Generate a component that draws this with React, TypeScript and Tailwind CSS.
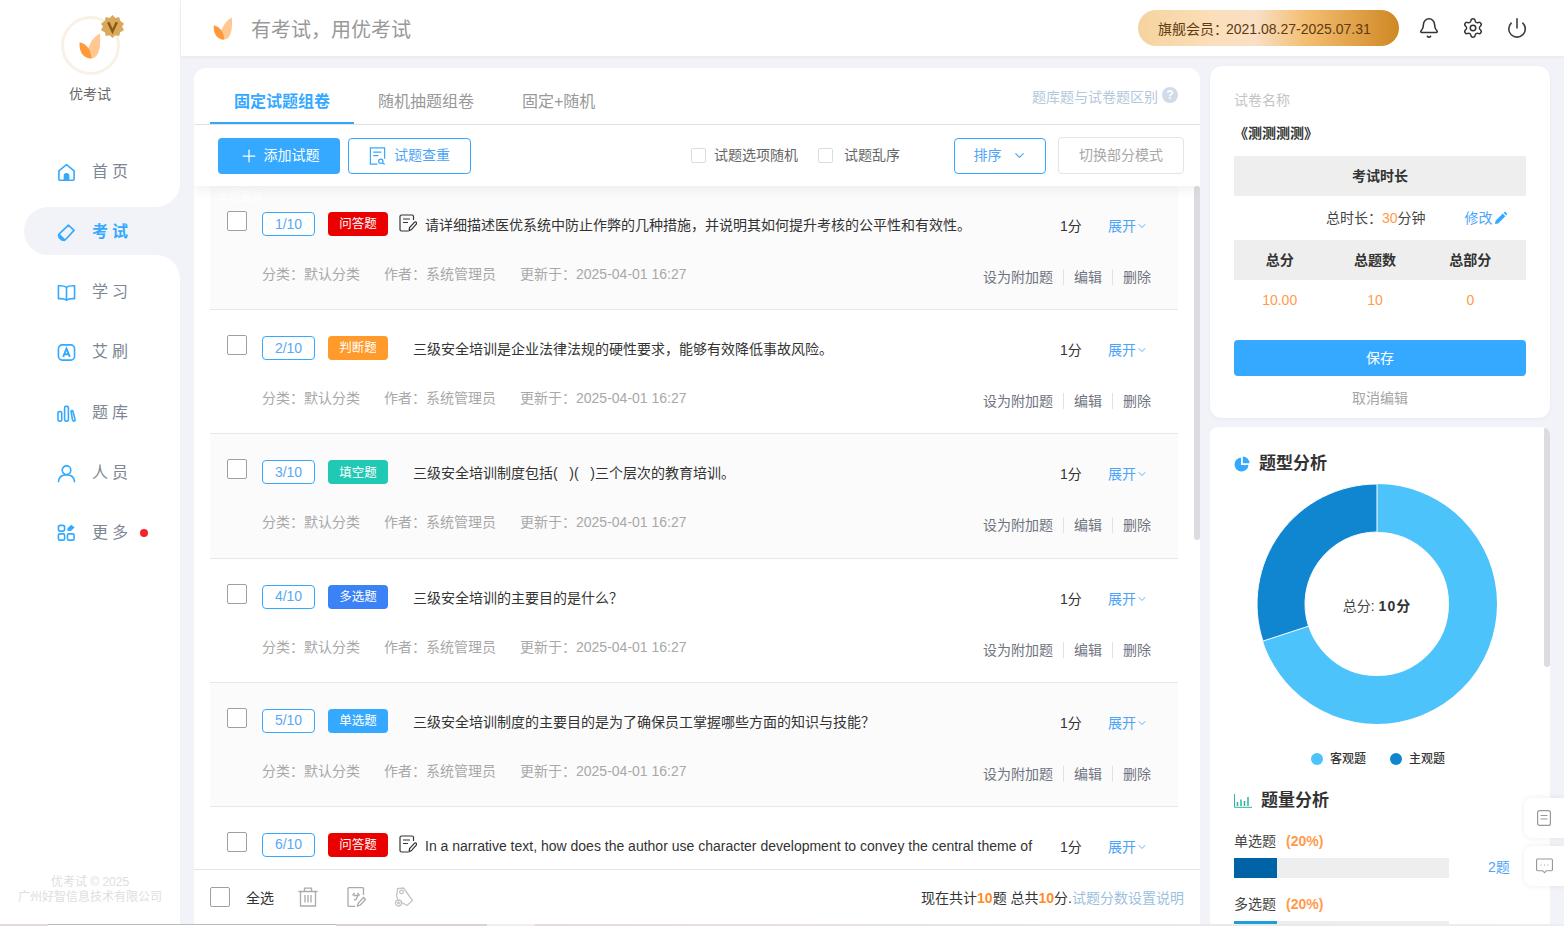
import { Bell, ChevronDown, Plus, Power, Settings } from "lucide-react";

const font = "[font-family:'Liberation_Sans','Noto_Sans_CJK_SC',sans-serif]";

type Question = {
  no: string;
  type: string;
  tagClass: string;
  text: string;
  essay?: boolean;
  tinted?: boolean;
  note?: string;
  cut?: boolean;
};

const questions: Question[] = [
  {
    no: "1/10",
    type: "问答题",
    tagClass: "bg-[#eb0000]",
    text: "请详细描述医优系统中防止作弊的几种措施，并说明其如何提升考核的公平性和有效性。",
    essay: true,
    tinted: true,
    note: "该题重复",
  },
  {
    no: "2/10",
    type: "判断题",
    tagClass: "bg-[#ff9a2b]",
    text: "三级安全培训是企业法律法规的硬性要求，能够有效降低事故风险。",
  },
  {
    no: "3/10",
    type: "填空题",
    tagClass: "bg-[#1fc9b4]",
    text: "三级安全培训制度包括(\u00a0\u00a0\u00a0)(\u00a0\u00a0\u00a0)三个层次的教育培训。",
    tinted: true,
  },
  {
    no: "4/10",
    type: "多选题",
    tagClass: "bg-[#3b82f6]",
    text: "三级安全培训的主要目的是什么？",
  },
  {
    no: "5/10",
    type: "单选题",
    tagClass: "bg-[#35a9ff]",
    text: "三级安全培训制度的主要目的是为了确保员工掌握哪些方面的知识与技能？",
    tinted: true,
  },
  {
    no: "6/10",
    type: "问答题",
    tagClass: "bg-[#eb0000]",
    text: "In a narrative text, how does the author use character development to convey the central theme of",
    essay: true,
    cut: true,
  },
];

function LeafLogo({ className }: { className: string }) {
  return (
    <svg viewBox="0 0 22 26" className={className}>
      <path d="M21 0.5C21.5 9 22 25 12 25.5C9 25.5 7 23 8 20C9.5 14 12 5 21 0.5Z" fill="#ffc890" />
      <path d="M0.5 9.5C5 10 12 14 12.5 25.5C5 25.5 0 20 0.5 9.5Z" fill="#ff9a3c" />
    </svg>
  );
}

function NavIcon({ name }: { name: string }) {
  const cls = "h-[19px] w-[19px] fill-none stroke-[#35a9ff] stroke-[1.7]";
  if (name === "home")
    return (
      <svg viewBox="0 0 20 20" className={cls}>
        <path d="M2 8.2L10 1.8L18 8.2V17.2A1 1 0 0 1 17 18.2H3A1 1 0 0 1 2 17.2Z" strokeLinejoin="round" />
        <path d="M7 18V13.5A3 3 0 0 1 13 13.5V18Z" fill="#35a9ff" stroke="none" />
      </svg>
    );
  if (name === "exam")
    return (
      <svg viewBox="0 0 20 20" className={cls}>
        <path d="M12 2.2L18 7.8L8.8 17.6A2 2 0 0 1 6 17.6L2.4 14.2A2 2 0 0 1 2.4 11.4Z" strokeLinejoin="round" />
        <path d="M2.4 11L9 17.4L6.5 18.8H4.5L1.4 15.6V13Z" fill="#35a9ff" stroke="none" />
      </svg>
    );
  if (name === "book")
    return (
      <svg viewBox="0 0 20 20" className={cls}>
        <path d="M10 4.5C8 3 5 2.8 1.5 3V16.5C5 16.3 8 16.5 10 18C12 16.5 15 16.3 18.5 16.5V3C15 2.8 12 3 10 4.5ZM10 4.5V18" strokeLinejoin="round" />
      </svg>
    );
  if (name === "a")
    return (
      <svg viewBox="0 0 20 20" className={cls}>
        <rect x="1.5" y="2" width="17" height="16" rx="4" />
        <path d="M6.5 14.5L10 5.8L13.5 14.5M7.8 11.8H12.2" strokeWidth="2" />
      </svg>
    );
  if (name === "bars")
    return (
      <svg viewBox="0 0 20 20" className={cls}>
        <rect x="1" y="8" width="4" height="10" rx="1.4" />
        <rect x="8" y="2.5" width="4" height="15.5" rx="1.4" />
        <path d="M14.8 7.5C15.2 6.7 16.3 6.7 16.7 7.5L19 16.5C19.2 17.5 18.6 18 17.7 18C16.8 18 16.4 17.5 16.2 16.5Z" />
      </svg>
    );
  if (name === "user")
    return (
      <svg viewBox="0 0 20 20" className={cls}>
        <circle cx="10" cy="6.5" r="4.5" />
        <path d="M1.5 18.5C2 14 5.5 11.5 10 11.5C14.5 11.5 18 14 18.5 18.5" strokeLinecap="round" />
      </svg>
    );
  return (
    <svg viewBox="0 0 20 20" className={cls}>
      <rect x="1.5" y="2.5" width="6.5" height="6" rx="2" />
      <rect x="1.5" y="11.5" width="6.5" height="6.5" rx="1.5" />
      <rect x="11" y="11.5" width="7" height="6.5" rx="1.5" />
      <path d="M11 8.5V5.5L15 1.8L18.6 4.8L14.5 8.5Z" fill="#35a9ff" stroke="none" />
    </svg>
  );
}

function EssayIcon() {
  return (
    <svg viewBox="0 0 18 18" className="h-[18px] w-[18px] fill-none stroke-[#333] stroke-[1.2]">
      <path d="M14.5 6V2.5A1.5 1.5 0 0 0 13 1H2.5A1.5 1.5 0 0 0 1 2.5V15.5A1.5 1.5 0 0 0 2.5 17H9" />
      <path d="M4 5H11M4 8.5H9" />
      <path d="M10 16.8L10.6 13.5L15.4 8.3C16 7.7 16.8 7.7 17.3 8.3C17.8 8.9 17.8 9.6 17.2 10.2L12.5 15.6Z" />
    </svg>
  );
}

function Check() {
  return <span className="h-5 w-5 shrink-0 rounded-[2px] border border-[#a0a0a0] bg-white" />;
}

function Row({ q }: { q: Question }) {
  return (
    <div className={`relative h-[124.2px] shrink-0 border-b border-[#e8e8e8] ${q.tinted ? "bg-[#fbfbfb]" : "bg-white"}`}>
      {q.note && <span className="absolute left-[6px] top-[2px] text-[12px] leading-4 text-white">{q.note}</span>}
      <div className="flex items-start pl-[17px] pt-[25px]">
        <Check />
        <span className="ml-[15px] mt-px flex h-6 w-[53px] shrink-0 items-center justify-center rounded-[4px] border border-[#35a9ff] bg-white text-[14px] text-[#5aa9f5]">
          {q.no}
        </span>
        <span className={`ml-[13px] mt-px flex h-6 w-[60px] shrink-0 items-center justify-center rounded-[4px] pt-px text-[12.5px] text-white ${q.tagClass}`}>
          {q.type}
        </span>
        {q.essay ? (
          <span className="ml-[11px] mt-[3px] flex w-[26px] shrink-0">
            <EssayIcon />
          </span>
        ) : (
          <span className="ml-[25px] shrink-0" />
        )}
        <p className="mt-1 w-[623px] truncate text-[14px] leading-5 text-[#333]">{q.text}</p>
        <span className="ml-auto mt-[5px] w-[48px] shrink-0 text-[14px] leading-5 text-[#333]">1分</span>
        <span className="mr-[33px] mt-[5px] flex w-[37px] shrink-0 items-center whitespace-nowrap text-[14px] leading-5 text-[#4ea5f7]">
          展开
          <ChevronDown className="h-3 w-3 shrink-0 text-[#4ea5f7]" strokeWidth={1.8} />
        </span>
      </div>
      {!q.cut && (
        <div className="mt-[28px] flex items-start pl-[52px] pr-[27px] text-[14px] leading-5 text-[#a8a8a8]">
          <span className="w-[122px]">分类：默认分类</span>
          <span className="w-[136px]">作者：系统管理员</span>
          <span>更新于：2025-04-01 16:27</span>
          <span className="ml-auto mt-[3px] flex items-center text-[#6f7480]">
            设为附加题
            <i className="mx-[10px] h-4 w-px bg-[#e2e2e2]" />
            编辑
            <i className="mx-[10px] h-4 w-px bg-[#e2e2e2]" />
            删除
          </span>
        </div>
      )}
    </div>
  );
}

function Donut() {
  return (
    <svg viewBox="0 0 240 240" className="mx-auto h-[240px] w-[240px]">
      <circle cx="120" cy="120" r="96" fill="none" stroke="#4dc3fb" strokeWidth="48" />
      <path d="M120 0A120 120 0 0 0 5.9 157.1L51.5 142.2A72 72 0 0 1 120 48Z" fill="#1186d0" stroke="#fff" strokeWidth="1" />
    </svg>
  );
}

function NavInner({ icon, label, className, dot }: { icon: string; label: string; className: string; dot?: boolean }) {
  return (
    <div className={`flex items-center bg-white pl-[57px] ${className}`}>
      <NavIcon name={icon} />
      <span className="ml-[16px] text-[16px] tracking-[4px] text-[#7d8794]">{label}</span>
      {dot && <i className="ml-[8px] h-2 w-2 rounded-full bg-[#f5222d]" />}
    </div>
  );
}

export default function App() {
  return (
    <div className={`flex h-[926px] w-[1564px] flex-col overflow-hidden bg-[#f1f3f8] ${font}`}>
      <div className="flex min-h-0 flex-1">
        {/* sidebar */}
        <aside className="flex w-[180px] shrink-0 flex-col bg-white">
          <div className="flex h-[141px] shrink-0 flex-col items-center pt-[16px]">
            <div className="relative flex h-[59px] w-[59px] items-center justify-center rounded-full border-[3px] border-[#f8f1e6] bg-white">
              <LeafLogo className="h-[26px] w-[22px]" />
              <svg viewBox="0 0 24 24" className="absolute -right-[7px] -top-[4px] h-[23px] w-[23px]">
                <path d="M12 0L15 3L19 2L20 6L24 9L22 12L24 16L20 18L19 22L15 21L12 24L9 21L5 22L4 18L0 16L2 12L0 9L4 6L5 2L9 3Z" fill="#d9a95c" />
                <path d="M7.5 7.5L12 17L16.5 7.5" fill="none" stroke="#8f5a12" strokeWidth="2.6" />
              </svg>
            </div>
            <span className="mt-[9px] text-[14px] leading-5 text-[#666]">优考试</span>
          </div>
          <div className="h-[66px] shrink-0 bg-[#f1f3f8]">
            <NavInner icon="home" label="首页" className="h-[66px] rounded-br-[24px] pb-[4px]" />
          </div>
          <div className="h-12 shrink-0 bg-white">
            <div className="ml-[24px] flex h-12 items-center rounded-l-[24px] bg-[#f1f3f8] pl-[33px] pt-[2px]">
              <NavIcon name="exam" />
              <span className="ml-[16px] text-[16px] font-bold tracking-[4px] text-[#35a9ff]">考试</span>
            </div>
          </div>
          <div className="h-[66px] shrink-0 bg-[#f1f3f8]">
            <NavInner icon="book" label="学习" className="h-[66px] rounded-tr-[24px] pt-[8px]" />
          </div>
          <NavInner icon="a" label="艾刷" className="h-[60px] shrink-0 pt-[2px]" />
          <NavInner icon="bars" label="题库" className="h-[61px] shrink-0 pt-[3px]" />
          <NavInner icon="user" label="人员" className="h-[60px] shrink-0 pt-[2px]" />
          <NavInner icon="more" label="更多" className="h-[60px] shrink-0 pt-[1px]" dot />
          <div className="mt-auto pb-[19px] text-center text-[12px] leading-[15px] text-[#dedede]">
            <div>优考试 © 2025</div>
            <div>广州好智信息技术有限公司</div>
          </div>
        </aside>

        <div className="ml-px flex min-w-0 flex-1 flex-col">
          {/* header */}
          <header className="flex h-14 shrink-0 items-center bg-white pl-[32px] pr-[36px] shadow-[0_1px_4px_rgba(0,0,0,0.06)]">
            <LeafLogo className="h-[23px] w-5" />
            <span className="ml-[18px] pt-[3px] text-[20px] text-[#999]">有考试，用优考试</span>
            <div className="ml-auto flex h-9 w-[261px] items-center rounded-full bg-[linear-gradient(90deg,#f6d39f_0%,#fbdfba_28%,#f9dfc4_45%,#f3bd70_65%,#cf8824_100%)] pl-5 pt-[2px] text-[14px] text-[#5e3a10]">
              旗舰会员<span className="tracking-[-2px]">：</span>2021.08.27-2025.07.31
            </div>
            <Bell className="ml-[19px] h-[22px] w-[22px] text-[#333]" strokeWidth={1.7} />
            <Settings className="ml-[22px] h-[22px] w-[22px] text-[#333]" strokeWidth={1.6} />
            <Power className="ml-[22px] h-[22px] w-[22px] text-[#444]" strokeWidth={1.8} />
          </header>

          <div className="flex min-h-0 flex-1 pl-[13px] pt-[10px]">
            {/* paper editor */}
            <main className="mt-[2px] flex w-[1006px] shrink-0 flex-col overflow-hidden rounded-t-[12px] bg-white">
              <div className="flex h-[57px] shrink-0 items-end border-b border-[#e4e4e4] px-4">
                <span className="flex h-[44px] w-[144px] items-start justify-center border-b-2 border-[#35a9ff] pt-[10px] text-[16px] font-bold text-[#35a9ff]">
                  固定试题组卷
                </span>
                <span className="ml-[24px] h-[44px] pt-[10px] text-[16px] text-[#999]">随机抽题组卷</span>
                <span className="ml-[48px] h-[44px] pt-[10px] text-[16px] text-[#999]">固定+随机</span>
                <span className="ml-auto flex h-[44px] items-start gap-1 pt-[7px] pr-[6px] text-[14px] text-[#b4c8dc]">
                  题库题与试卷题区别
                  <span className="flex h-4 w-4 items-center justify-center rounded-full bg-[#cfdce8] text-[12px] font-bold text-white">?</span>
                </span>
              </div>
              <div className="relative z-10 flex h-[61px] shrink-0 items-center pl-6 pr-4 shadow-[0_4px_12px_rgba(0,0,0,0.06)]">
                <button className="flex h-9 w-[122px] items-center justify-center gap-[5px] rounded-[4px] bg-[#35a9ff] text-[14px] text-white">
                  <Plus className="h-[20px] w-[20px]" strokeWidth={1.5} />
                  添加试题
                </button>
                <button className="ml-2 flex h-9 w-[123px] items-center justify-center gap-2 rounded-[4px] border border-[#35a9ff] text-[14px] text-[#4ea5f7]">
                  <svg viewBox="0 0 18 20" className="h-5 w-[17px] fill-none stroke-[#35a9ff] stroke-[1.3]">
                    <path d="M9 18.5H1.5V1.5H16.5V13M4.5 6H13M4.5 9.5H10" />
                    <circle cx="12.5" cy="15.5" r="2.3" />
                    <path d="M14.5 17.3L16.5 19" />
                  </svg>
                  试题查重
                </button>
                <span className="ml-[220px] h-[15px] w-[15px] rounded-[2px] border border-[#dcdcdc]" />
                <span className="ml-2 text-[14px] text-[#666]">试题选项随机</span>
                <span className="ml-5 h-[15px] w-[15px] rounded-[2px] border border-[#dcdcdc]" />
                <span className="ml-[11px] text-[14px] text-[#666]">试题乱序</span>
                <button className="ml-[54px] flex h-9 w-[92px] items-center justify-center gap-[10px] rounded-[4px] border border-[#35a9ff] text-[14px] text-[#4ea5f7]">
                  排序
                  <ChevronDown className="h-[15px] w-[15px]" strokeWidth={1.8} />
                </button>
                <button className="ml-3 h-[37px] w-[126px] rounded-[4px] border border-[#e4e4e4] text-[14px] text-[#a8a8a8]">
                  切换部分模式
                </button>
              </div>
              <div className="relative min-h-0 flex-1 overflow-hidden">
                <div className="flex flex-col pl-4 pr-[22px]">
                  {questions.map((q) => (
                    <Row key={q.no} q={q} />
                  ))}
                </div>
                <span className="absolute right-0 top-0 h-[354px] w-[6px] rounded-[3px] bg-[#dcdce0]" />
              </div>
              <footer className="flex h-[55px] shrink-0 items-center border-t border-[#e4e4e4] bg-white pl-4 pr-4">
                <Check />
                <span className="ml-4 mt-[3px] text-[14px] text-[#333]">全选</span>
                <svg viewBox="0 0 20 20" className="ml-[24px] h-5 w-5 fill-none stroke-[#aaa] stroke-[1.3]">
                  <path d="M0.5 4.5H19.5M6.5 4V1.2H13.5V4M2.5 4.5V19H17.5V4.5M7 8V15.5M10 8V15.5M13 8V15.5" />
                </svg>
                <svg viewBox="0 0 20 20" className="ml-[28px] h-5 w-5 fill-none stroke-[#aaa] stroke-[1.3]">
                  <path d="M17.5 8V1.5A1 1 0 0 0 16.5 0.7H3A1 1 0 0 0 2 1.5V18.5A1 1 0 0 0 3 19.3H9" />
                  <path d="M6.5 8.5L8.5 6M11.5 6L13.5 8.5M8 8.5H12L10 12.5L8 13" />
                  <path d="M11.5 19L12.3 16L17.5 10.5L19.5 12.5L14.3 18Z" />
                </svg>
                <svg viewBox="0 0 20 20" className="ml-[28px] h-5 w-5 fill-none stroke-[#c4c4c4] stroke-[1.3]">
                  <path d="M3.5 3V1.5L9.5 1L18.5 13.5L13 18.5L7 15M3.5 3L2.5 9L4 12.5" />
                  <circle cx="7.5" cy="5" r="1.8" />
                  <circle cx="4.5" cy="16" r="3" />
                  <path d="M3 16H6M4.5 14.5V17.5" />
                </svg>
                <span className="ml-auto mt-[3px] text-[14px] text-[#333]">
                  现在共计<b className="text-[#ff8c2b]">10</b>题 总共<b className="text-[#ff8c2b]">10</b>分.
                  <span className="text-[#9cc0de]">试题分数设置说明</span>
                </span>
              </footer>
            </main>

            {/* right column */}
            <div className="ml-[10px] flex w-[340px] shrink-0 flex-col gap-[9px]">
              <section className="h-[352px] shrink-0 rounded-[12px] bg-white px-6 pt-[24px] shadow-[0_1px_4px_rgba(0,0,0,0.04)]">
                <div className="text-[14px] leading-5 text-[#c4c4c4]">试卷名称</div>
                <div className="mt-[13px] text-[14px] font-bold leading-5 text-[#333]">《测测测测》</div>
                <div className="mt-[13px] flex h-10 items-center justify-center bg-[#eeeeee] text-[14px] font-bold text-[#333]">考试时长</div>
                <div className="relative flex h-11 items-center pl-[92px] text-[14px] text-[#444]">
                  总时长：<span className="text-[#ff9a4d]">30</span>分钟
                  <span className="ml-[39px] flex items-center gap-[2px] text-[#4ea5f7]">
                    修改
                    <svg viewBox="0 0 12 12" className="h-3 w-3 fill-[#35a9ff]">
                      <path d="M0 12L0.6 8.8L7.8 1.6L10.4 4.2L3.2 11.4ZM8.6 0.8L9.4 0C9.8 -0.2 10.2 -0.2 10.6 0.1L11.9 1.4C12.1 1.8 12.1 2.2 11.9 2.6L11.2 3.4Z" />
                    </svg>
                  </span>
                </div>
                <div className="h-10 bg-[#eeeeee]">
                  <div className="-ml-[2px] grid h-10 w-[286px] grid-cols-3 items-center text-center text-[14px] font-bold text-[#333]">
                    <span>总分</span>
                    <span>总题数</span>
                    <span>总部分</span>
                  </div>
                </div>
                <div className="-ml-[2px] grid h-10 w-[286px] grid-cols-3 items-center text-center text-[14px] text-[#ff9a4d]">
                  <span>10.00</span>
                  <span>10</span>
                  <span>0</span>
                </div>
                <button className="mt-5 flex h-9 w-full items-center justify-center rounded-[4px] bg-[#35a9ff] text-[14px] text-white">保存</button>
                <div className="mt-[12px] text-center text-[14px] leading-5 text-[#a5a5a5]">取消编辑</div>
              </section>

              <section className="relative min-h-0 flex-1 overflow-hidden rounded-t-[8px] bg-white pl-6">
                <span className="absolute right-0 top-0 h-[240px] w-[6px] rounded-[3px] bg-[#dcdce0]" />
                <div className="flex items-center pt-[26px] text-[17px] font-bold leading-[22px] text-[#333]">
                  <svg viewBox="0 0 16 16" className="mr-[9px] h-4 w-4">
                    <path d="M7 1.5A7 7 0 1 0 14.5 9H7Z" fill="#35a9ff" />
                    <path d="M8.8 0.5A7 7 0 0 1 15.5 7.2H8.8Z" fill="#35a9ff" />
                  </svg>
                  题型分析
                </div>
                <div className="-ml-6 mt-[9px] pl-[47px] pr-[53px]">
                  <div className="relative">
                    <Donut />
                    <span className="absolute left-0 right-0 top-[112px] text-center text-[14px] leading-5 text-[#444]">
                      总分: <b className="tracking-[1px] text-[#333]">10分</b>
                    </span>
                  </div>
                </div>
                <div className="mt-[25px] flex items-center pl-[77px] text-[12px] font-medium leading-5 text-[#333]">
                  <i className="h-3 w-3 rounded-full bg-[#4dc3fb]" />
                  <span className="ml-[7px]">客观题</span>
                  <i className="ml-6 h-3 w-3 rounded-full bg-[#1186d0]" />
                  <span className="ml-[7px]">主观题</span>
                </div>
                <div className="mt-[21px] flex items-center text-[17px] font-bold leading-[22px] text-[#333]">
                  <svg viewBox="0 0 18 14" className="mr-[9px] h-[14px] w-[18px] fill-none stroke-[1.5]">
                    <path d="M0.5 0V13.3H18" stroke="#2bb5a0" strokeWidth="1" />
                    <path d="M3.5 12V8M7 12V5.5M10.5 12V7M14 12V3" stroke="#2bb5a0" />
                  </svg>
                  题量分析
                </div>
                <div className="mt-[19px] flex text-[14px] leading-5 text-[#444]">
                  <span>单选题</span>
                  <b className="ml-[10px] text-[#ff9a4d]">(20%)</b>
                </div>
                <div className="mt-[6px] flex items-center">
                  <div className="h-5 w-[215px] bg-[#eeeeee]">
                    <div className="h-5 w-[43px] bg-[#0063a5]" />
                  </div>
                  <span className="ml-[39px] text-[14px] text-[#4ea5f7]">2题</span>
                </div>
                <div className="mt-[16px] flex text-[14px] leading-5 text-[#444]">
                  <span>多选题</span>
                  <b className="ml-[10px] text-[#ff9a4d]">(20%)</b>
                </div>
                <div className="mt-[7px] h-5 w-[215px] bg-[#eeeeee]">
                  <div className="h-5 w-[43px] bg-[#1e9fdc]" />
                </div>
              </section>
            </div>
          </div>
        </div>
      </div>

      {/* strip at the window's lower edge */}
      <div className="flex h-[2px] shrink-0">
        <div className="w-[48px] bg-[#e6d8d6]" />
        <div className="w-[288px] border-t border-[#bbbbbb] bg-white" />
        <div className="w-[151px] bg-[#d9d2d0]" />
        <div className="w-[48px] bg-[#f3eeee]" />
        <div className="flex-1 bg-[linear-gradient(90deg,#ebd9d9,#e8e6e8_50%,#eceef2)]" />
      </div>

      {/* floating tools */}
      <div className="absolute left-[1524px] top-[798px] flex h-10 w-10 items-center justify-center rounded-l-[8px] bg-white shadow-[0_0_6px_rgba(0,0,0,0.08)]">
        <svg viewBox="0 0 14 16" className="h-4 w-[14px] fill-none stroke-[#999] stroke-[1.2]">
          <rect x="0.6" y="0.6" width="12.8" height="14.8" rx="2" />
          <path d="M3.5 5.5H10.5M3.5 9H10.5" />
        </svg>
      </div>
      <div className="absolute left-[1524px] top-[846px] flex h-10 w-10 items-center justify-center rounded-l-[8px] bg-white shadow-[0_0_6px_rgba(0,0,0,0.08)]">
        <svg viewBox="0 0 18 16" className="h-4 w-[17px] fill-none stroke-[#999] stroke-[1.2]">
          <path d="M1.5 0.6H16.5A1 1 0 0 1 17.4 1.6V12A1 1 0 0 1 16.5 13H11L9 15L7 13H1.5A1 1 0 0 1 0.6 12V1.6A1 1 0 0 1 1.5 0.6Z" />
          <path d="M5 7H5.6M8.7 7H9.3M12.4 7H13" strokeWidth="1.6" />
        </svg>
      </div>
    </div>
  );
}
